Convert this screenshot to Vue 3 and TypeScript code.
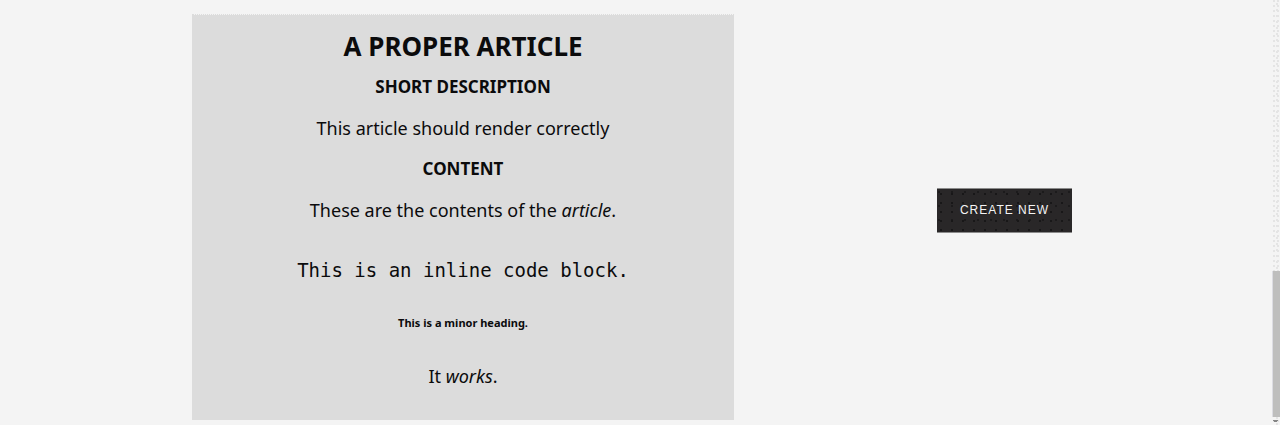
<script setup lang="ts">
interface Article {
  title: string
  description: string
}

const article: Article = {
  title: 'A proper article',
  description: 'This article should render correctly',
}
</script>

<template>
  <div class="page">
    <main class="layout">
      <article class="card">
        <h1 class="title">{{ article.title }}</h1>
        <h2 class="label">Short description</h2>
        <p class="text">{{ article.description }}</p>
        <h2 class="label">Content</h2>
        <div class="content">
          <p class="text">These are the contents of the <em>article</em>.</p>
          <pre class="code"><code>This is an inline code block.</code></pre>
          <h6 class="minor">This is a minor heading.</h6>
          <p class="text">It <em>works</em>.</p>
        </div>
      </article>
      <div class="actions">
        <button type="button" class="create">Create new</button>
      </div>
    </main>
    <div class="scrollbar" aria-hidden="true">
      <div class="thumb"></div>
      <svg class="arrow" viewBox="0 0 8 8"><path d="M1 3h5v1h-1v1h-3v-1h-1z" fill="#858585" /></svg>
    </div>
  </div>
</template>

<style>
body {
  background: #f4f4f4;
}
</style>

<style scoped>
.page {
  display: flex;
  box-sizing: border-box;
  min-height: 100vh;
  color: #0b0b0c;
  font-family: "Noto Sans", "Open Sans", sans-serif;
}

.layout {
  display: grid;
  flex: 1;
  grid-template-columns: 542fr 535fr;
  column-gap: 3px;
  align-items: center;
  padding: 14px 0 5px 15%;
}

.card {
  align-self: stretch;
  box-sizing: border-box;
  padding: 15px 16px 28px;
  border-top: 1px dotted #dcdcdc;
  background: #dcdcdc padding-box;
  text-align: center;
}

.title {
  margin: 0;
  font-size: 26px;
  line-height: 32px;
  text-transform: uppercase;
}

.label {
  margin: 13px 0 0;
  font-size: 17px;
  line-height: 24px;
  text-transform: uppercase;
}

.text {
  margin: 16px 0 0;
  font-size: 18px;
  line-height: 26px;
}

.label + .text {
  margin-bottom: 16px;
}

.code {
  margin: 35px 0 0;
  font-size: 19px;
  line-height: 24px;
}

.code code {
  font-family: "DejaVu Sans Mono", monospace;
}

.minor {
  margin: 32px 0 0;
  font-size: 11px;
  line-height: 18px;
}

.minor + .text {
  margin-top: 31px;
}

.actions {
  display: flex;
  justify-content: center;
  padding-bottom: 14px;
}

.create {
  padding: 14px 23px;
  border: solid #8b8b8b;
  border-width: 1px 0;
  border-radius: 0;
  background-color: #292728;
  background-image:
    radial-gradient(circle at 4px 5px, #181718 1px, transparent 1px),
    radial-gradient(circle at 2px 3px, #1c1b1c 1px, transparent 1px);
  background-size: 11px 9px, 13px 14px;
  color: #f4f4f4;
  font-family: "Liberation Sans", Arial, sans-serif;
  font-size: 12px;
  line-height: 15px;
  letter-spacing: 1px;
  text-transform: uppercase;
  cursor: pointer;
}

.scrollbar {
  display: flex;
  flex-direction: column;
  justify-content: flex-end;
  width: 8px;
  background-image:
    radial-gradient(circle at 2px 1px, #e4e4e4 1px, transparent 1px),
    radial-gradient(circle at 5px 4px, #e4e4e4 1px, transparent 1px);
  background-size: 4px 5px, 8px 6px;
}

.thumb {
  height: 146px;
  border-left: 1px solid #dcdce2;
  background: #bebebd;
}

.arrow {
  display: block;
  width: 8px;
  height: 8px;
}
</style>
